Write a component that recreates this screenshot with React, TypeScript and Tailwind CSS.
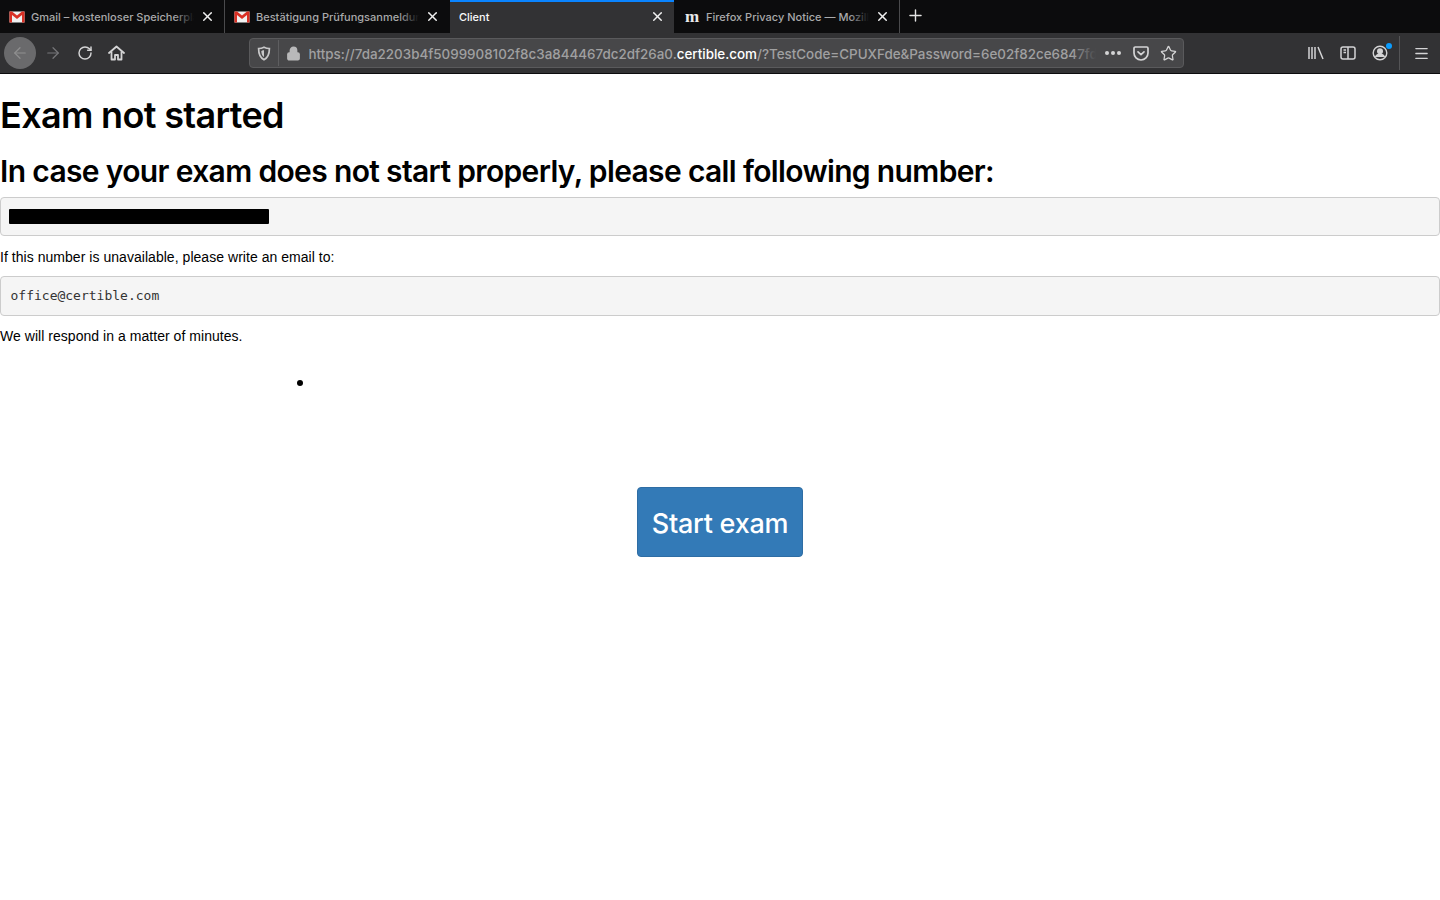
import { ArrowLeft, ArrowRight, RotateCw, Lock, Star, X, Plus, Menu } from "lucide-react";

interface TabProps {
    title: string;
    icon?: React.ReactNode;
    active?: boolean;
    fade?: boolean;
}

const GmailIcon = () => (
    <svg width="16" height="14" viewBox="0 0 16 14" className="shrink-0">
        <rect x="0.5" y="1.5" width="15" height="11" fill="#f1f1f1" />
        <path d="M0.5 1.500h2.500l5 4 5-4h2.500v11H13V5L8 9 3 5v7.500H0.500z" fill="#d93025" />
    </svg>
);

const Tab = ({ title, icon, active, fade = true }: TabProps) => (
    <div
        className={`relative flex h-[33px] w-[224px] shrink-0 items-center pl-[9px] pr-[9px] ${
            active ? "bg-[#323234] text-[#f9f9fa]" : "text-[#a9a9aa]"
        }`}
    >
        {active && <div className="absolute inset-x-0 top-0 h-[2px] bg-[#0a84ff]" />}
        {icon && <div className="mr-[6px] flex w-[16px] justify-center">{icon}</div>}
        <div className="relative top-[1px] min-w-0 flex-1 overflow-hidden whitespace-nowrap text-[11px] font-medium">
            {title}
            {fade && (
                <div className="absolute inset-y-0 right-0 w-[20px] bg-gradient-to-r from-transparent to-[#0c0c0d]" />
            )}
        </div>
        <X size={15} strokeWidth={2.4} className="ml-[6px] shrink-0 text-[#f0f0f0]" />
    </div>
);

const Sep = () => <div className="h-[33px] w-px shrink-0 bg-[#4a4a4c]" />;

const TabBar = () => (
    <div className="flex h-[33px] items-center bg-[#0c0c0d] font-['Inter',sans-serif]">
        <Tab title="Gmail – kostenloser Speicherplatz" icon={<GmailIcon />} />
        <Sep />
        <Tab title="Bestätigung Prüfungsanmeldung" icon={<GmailIcon />} />
        <div className="w-px" />
        <Tab title="Client" active fade={false} />
        <div className="w-px" />
        <Tab
            title="Firefox Privacy Notice — Mozilla"
            icon={<span className="font-['Liberation_Serif',serif] text-[17px] leading-none font-bold text-[#e8e8e8]">m</span>}
        />
        <Sep />
        <Plus size={19} strokeWidth={1.8} className="relative -top-[1px] ml-[6px] text-[#e4e4e4]" />
    </div>
);

const NavBar = () => (
    <div className="flex h-[41px] items-center border-b border-[#0c0c0d] bg-[#323234] font-['Inter',sans-serif] text-[#d4d4d5]">
        <div className="ml-[4px] flex h-[32px] w-[32px] items-center justify-center rounded-full bg-[#6a6a6c]">
            <ArrowLeft size={18} strokeWidth={1.6} className="text-[#8f8f90]" />
        </div>
        <ArrowRight size={18} strokeWidth={1.6} className="ml-[8px] text-[#77777a]" />
        <RotateCw size={16} strokeWidth={2.2} className="ml-[15px]" />
        <svg width="17" height="16" viewBox="0 0 17 16" className="ml-[15px] shrink-0" fill="none" stroke="currentColor" strokeWidth="1.800">
            <path d="M1 8l7.500-6.500L16 8" strokeLinecap="round" strokeLinejoin="round" />
            <path d="M3.500 6.500V14.500h3.500V10h3v4.500h3.500V6.500" strokeLinejoin="round" />
        </svg>
        <div className="ml-[124px] flex h-[30px] w-[935px] items-center rounded-[4px] border border-[#5a5a5c] bg-[#474749]">
            <svg width="14" height="15" viewBox="0 0 14 15" fill="none" className="ml-[7px] shrink-0 text-[#c8c8c9]">
                <path d="M7 1.200c2 1 3.600 1.300 5.400 1.300 0 5.500-1.700 9.400-5.400 11.200C3.300 11.900 1.600 8 1.600 2.500 3.400 2.500 5 2.200 7 1.200z" stroke="currentColor" strokeWidth="1.700" />
                <path d="M7 4v7C5.200 10 4.400 7.800 4.300 5 5.500 4.900 6.200 4.500 7 4z" fill="currentColor" />
            </svg>
            <div className="ml-[7px] h-[26px] w-px bg-[#5e5e60]" />
            <Lock size={15} strokeWidth={2.4} className="ml-[6.500px] shrink-0 fill-[#b9b9ba] text-[#b9b9ba]" />
            <div className="relative top-[1px] ml-[8px] w-[787px] overflow-hidden whitespace-nowrap text-[13.400px] font-medium text-[#a0a0a1]">
                https://7da2203b4f5099908102f8c3a844467dc2df26a0.<span className="text-white">certible.com</span>/?TestCode=CPUXFde&amp;Password=6e02f82ce6847fd6a1
                <div className="absolute inset-y-0 right-0 w-[24px] bg-gradient-to-r from-transparent to-[#474749]" />
            </div>
            <div className="ml-[9px] flex gap-[2px]">
                <div className="h-[4px] w-[4px] rounded-full bg-[#d4d4d5]" />
                <div className="h-[4px] w-[4px] rounded-full bg-[#d4d4d5]" />
                <div className="h-[4px] w-[4px] rounded-full bg-[#d4d4d5]" />
            </div>
            <svg width="16" height="15" viewBox="0 0 16 15" fill="none" stroke="currentColor" strokeWidth="1.700" className="ml-[12px] shrink-0">
                <path d="M2.200 1h11.600c.7 0 1.200.5 1.200 1.200V7c0 3.800-3.100 7-7 7s-7-3.200-7-7V2.200C1 1.500 1.500 1 2.200 1z" />
                <path d="M5 5.800l3 2.800 3-2.800" strokeLinecap="round" strokeLinejoin="round" />
            </svg>
            <Star size={17} strokeWidth={1.800} className="ml-[11px] shrink-0" />
        </div>
        <div className="ml-[124px] flex items-center">
            <svg width="16" height="14" viewBox="0 0 16 14" fill="none" stroke="currentColor" strokeWidth="1.500">
                <path d="M1 1v12M4 1v12M7 1v12M10 1l5 12" />
            </svg>
            <svg width="16" height="14" viewBox="0 0 16 14" fill="none" stroke="currentColor" strokeWidth="1.500" className="ml-[16px]">
                <rect x="1" y="1" width="14" height="12" rx="2" />
                <path d="M8 1v12M3.500 4h2.500M3.500 6.500h2.500" />
            </svg>
            <div className="relative ml-[16px]">
                <svg width="16" height="16" viewBox="0 0 16 16" fill="none" stroke="currentColor" strokeWidth="1.400">
                    <circle cx="8" cy="8" r="6.800" />
                    <circle cx="8" cy="6.300" r="2.300" fill="currentColor" />
                    <path d="M3.500 12c1-2 2.500-2.700 4.500-2.700s3.500.7 4.500 2.700" fill="currentColor" />
                </svg>
                <div className="absolute -right-[4px] -top-[2px] h-[6px] w-[6px] rounded-full bg-[#0a9dff]" />
            </div>
            <div className="ml-[11px] h-[34px] w-px bg-[#545456]" />
            <Menu size={17} strokeWidth={1.800} className="ml-[13px]" />
        </div>
    </div>
);

export default function App() {
    return (
        <div className="min-h-[900px] bg-white">
            <TabBar />
            <NavBar />
            <div className="font-['Liberation_Sans',Arial,sans-serif] text-[14px] leading-[20px] tracking-[0.04px] text-black">
                <h1 className="mt-[21px] mb-[10px] font-['Inter',sans-serif] text-[36px] leading-[40px] font-semibold tracking-[-0.66px]">
                    Exam not started
                </h1>
                <h2 className="mt-[20px] mb-[9px] font-['Inter',sans-serif] text-[30px] leading-[33px] font-semibold tracking-[-0.65px]">
                    In case your exam does not start properly, please call following number:
                </h2>
                <div className="mb-[10px] flex h-[39px] items-center rounded-[4px] border border-[#ccc] bg-[#f5f5f5] pl-[8px]">
                    <div className="h-[15px] w-[260px] rounded-[1px] bg-black" />
                </div>
                <p className="mb-[9px] pt-[1px]">If this number is unavailable, please write an email to:</p>
                <div className="mb-[10px] flex h-[40px] items-center rounded-[4px] border border-[#ccc] bg-[#f5f5f5] pl-[9.500px] font-['DejaVu_Sans_Mono',monospace] text-[13px] tracking-normal text-[#333]">
                    office@certible.com
                </div>
                <p>We will respond in a matter of minutes.</p>
                <div className="mt-[34px] ml-[297px] h-[6px] w-[6px] rounded-full bg-black" />
                <div className="mt-[101px] flex justify-center">
                    <button className="h-[70px] w-[166px] rounded-[4px] border border-[#2e6da4] bg-[#337ab7] pt-[3px] font-['Inter',sans-serif] text-[27px] font-medium tracking-[-0.25px] text-white">
                        Start exam
                    </button>
                </div>
            </div>
        </div>
    );
}
